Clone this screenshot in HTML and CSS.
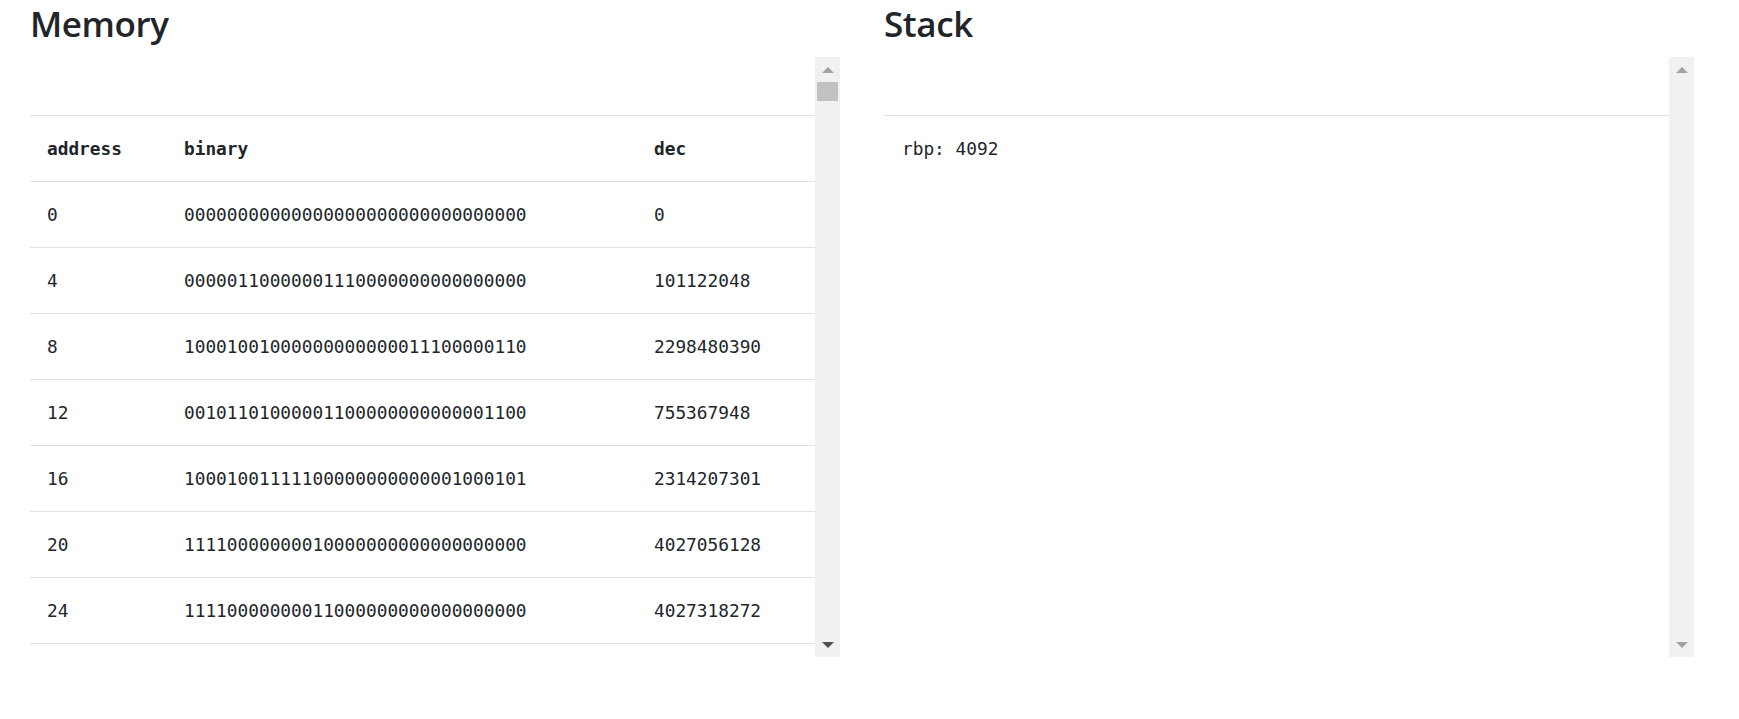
FILE: index.html
```html
<!DOCTYPE html>
<html>
<head>
<meta charset="utf-8">
<title>Memory / Stack</title>
<link rel="stylesheet" href="styles.css">
</head>
<body>
<div class="page">
  <section class="panel">
    <h2 class="title">Memory</h2>
    <div class="scrollbox">
      <div class="viewport">
        <div class="mem-grid">
          <div class="cell head">address</div><div class="cell head">binary</div><div class="cell head">dec</div>
          <div class="cell">0</div><div class="cell">00000000000000000000000000000000</div><div class="cell">0</div>
          <div class="cell">4</div><div class="cell">00000110000001110000000000000000</div><div class="cell">101122048</div>
          <div class="cell">8</div><div class="cell">10001001000000000000011100000110</div><div class="cell">2298480390</div>
          <div class="cell">12</div><div class="cell">00101101000001100000000000001100</div><div class="cell">755367948</div>
          <div class="cell">16</div><div class="cell">10001001111100000000000001000101</div><div class="cell">2314207301</div>
          <div class="cell">20</div><div class="cell">11110000000010000000000000000000</div><div class="cell">4027056128</div>
          <div class="cell">24</div><div class="cell">11110000000011000000000000000000</div><div class="cell">4027318272</div>
        </div>
      </div>
      <div class="scrollbar">
        <div class="sb-btn"><span class="arrow-up light"></span></div>
        <div class="sb-track"><div class="sb-thumb"></div></div>
        <div class="sb-btn"><span class="arrow-down dark"></span></div>
      </div>
    </div>
  </section>
  <section class="panel">
    <h2 class="title">Stack</h2>
    <div class="scrollbox">
      <div class="viewport">
        <div class="stack-row">rbp: 4092</div>
      </div>
      <div class="scrollbar">
        <div class="sb-btn"><span class="arrow-up light"></span></div>
        <div class="sb-track"></div>
        <div class="sb-btn"><span class="arrow-down light"></span></div>
      </div>
    </div>
  </section>
</div>
</body>
</html>
```

FILE: styles.css
```css
html, body {
  margin: 0;
  padding: 0;
  background: #ffffff;
  color: #212529;
}

.page {
  display: flex;
  gap: 44px;
  padding-left: 30px;
}

.panel {
  width: 810px;
  display: flex;
  flex-direction: column;
}

.title {
  margin: 0;
  height: 57px;
  font-family: "Open Sans", "Noto Sans", sans-serif;
  font-weight: 600;
  font-size: 35px;
  line-height: 48px;
  letter-spacing: -0.4px;
  color: #212529;
}

.scrollbox {
  height: 600px;
  display: flex;
}

.viewport {
  flex: 1;
  overflow: hidden;
  padding-top: 58px;
  font-family: "DejaVu Sans Mono", "Liberation Mono", monospace;
  font-size: 17.8px;
  color: #212529;
}

.mem-grid {
  display: grid;
  grid-template-columns: 137px 470px 1fr;
  border-top: 1px solid #dee2e6;
}

.cell {
  height: 65px;
  border-bottom: 1px solid #dee2e6;
  padding-left: 17px;
  display: flex;
  align-items: center;
  white-space: nowrap;
}

.cell.head {
  font-weight: bold;
}

.stack-row {
  border-top: 1px solid #dee2e6;
  height: 65px;
  padding-left: 18px;
  display: flex;
  align-items: center;
}

.scrollbar {
  width: 25px;
  background: #f1f1f1;
  display: flex;
  flex-direction: column;
}

.sb-btn {
  height: 25px;
  display: flex;
  align-items: center;
  justify-content: center;
}

.sb-track {
  flex: 1;
  padding: 0 2px;
}

.sb-thumb {
  height: 19px;
  background: #c1c1c1;
}

.arrow-up, .arrow-down {
  width: 0;
  height: 0;
  border-left: 6px solid transparent;
  border-right: 6px solid transparent;
}

.arrow-up {
  border-bottom: 6px solid #a3a3a3;
}

.arrow-down {
  border-top: 6px solid #a3a3a3;
}

.arrow-down.dark {
  border-top-color: #505050;
}
```
